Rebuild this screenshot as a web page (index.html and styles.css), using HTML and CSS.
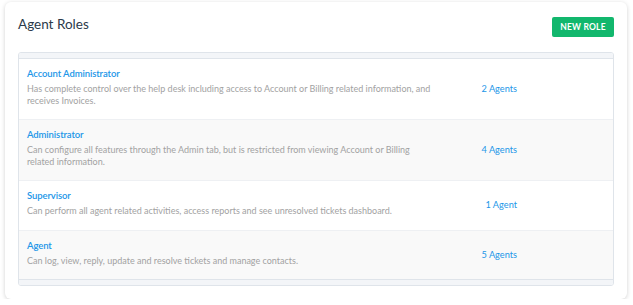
FILE: index.html
```html
<!DOCTYPE html>
<html lang="en">
<head>
  <meta charset="UTF-8">
  <meta name="viewport" content="width=device-width, initial-scale=1.0">
  <link rel="stylesheet" href="styles.css">
</head>
<body>
  <div class="card">
    <div class="card-header">
      <h1>Agent Roles</h1>
      <button class="btn-new">NEW ROLE</button>
    </div>

    <div class="roles">
      <div class="roles-top"></div>

      <div class="role-row">
        <div class="role-info">
          <a class="role-name" href="#">Account Administrator</a>
          <p class="role-desc">Has complete control over the help desk including access to Account or Billing related information, and receives Invoices.</p>
        </div>
        <a class="role-count" href="#">2 Agents</a>
      </div>

      <div class="role-row alt">
        <div class="role-info">
          <a class="role-name" href="#">Administrator</a>
          <p class="role-desc">Can configure all features through the Admin tab, but is restricted from viewing Account or Billing related information.</p>
        </div>
        <a class="role-count" href="#">4 Agents</a>
      </div>

      <div class="role-row">
        <div class="role-info">
          <a class="role-name" href="#">Supervisor</a>
          <p class="role-desc">Can perform all agent related activities, access reports and see unresolved tickets dashboard.</p>
        </div>
        <a class="role-count" href="#">1 Agent</a>
      </div>

      <div class="role-row alt">
        <div class="role-info">
          <a class="role-name" href="#">Agent</a>
          <p class="role-desc">Can log, view, reply, update and resolve tickets and manage contacts.</p>
        </div>
        <a class="role-count" href="#">5 Agents</a>
      </div>

      <div class="roles-bottom"></div>
    </div>
  </div>
</body>
</html>
```

FILE: styles.css
```css
:root {
  --link-color: #2196e8;
  --text-muted: #a2a2a2;
  --title-color: #2b3a4a;
  --green: #12b76d;
  --border-color: #dfe4ea;
  --strip-bg: #f3f5f8;
  --row-alt: #f9f9f9;
}

body {
  margin: 0;
  background: #fff;
  font-family: Lato, "Open Sans", sans-serif;
}

.card {
  margin: 2px 6px 0 5px;
  height: 297px;
  box-sizing: border-box;
  padding: 12px 13px 14px 13px;
  background: #fff;
  border-radius: 6px;
  box-shadow: 0 1px 4px rgba(0, 0, 0, 0.18);
}

.card-header {
  display: flex;
  justify-content: space-between;
  align-items: flex-start;
  height: 38px;
}

h1 {
  margin: 0;
  font-size: 13.5px;
  font-weight: 400;
  line-height: 20px;
  color: var(--title-color);
}

.btn-new {
  margin-top: 3px;
  width: 62px;
  height: 20px;
  padding: 0;
  border: none;
  border-radius: 2px;
  background: var(--green);
  color: #fff;
  font-family: inherit;
  font-size: 8.5px;
  font-weight: 700;
  letter-spacing: 0.2px;
}

.roles {
  border: 1px solid var(--border-color);
  border-radius: 3px;
  overflow: hidden;
}

.roles-top {
  height: 5px;
  background: var(--strip-bg);
  border-bottom: 1px solid var(--border-color);
}

.roles-bottom {
  height: 5px;
  background: var(--strip-bg);
  border-top: 1px solid var(--border-color);
}

.role-row {
  display: grid;
  grid-template-columns: 410px 80px;
  align-items: center;
  padding: 8px 8px 13px 8px;
  background: #fff;
  border-bottom: 1px solid #eef0f3;
}

.role-row.alt {
  background: var(--row-alt);
}

.role-row:nth-last-child(2) {
  border-bottom: none;
}

.role-name {
  display: block;
  font-size: 9.5px;
  font-weight: 600;
  line-height: 13px;
  letter-spacing: -0.1px;
  color: var(--link-color);
  text-decoration: none;
}

.role-desc {
  margin: 3px 0 0;
  font-size: 9px;
  line-height: 11.5px;
  color: var(--text-muted);
}

.role-count {
  margin-top: 5px;
  text-align: right;
  font-size: 9.2px;
  line-height: 12px;
  color: var(--link-color);
  text-decoration: none;
}
```
